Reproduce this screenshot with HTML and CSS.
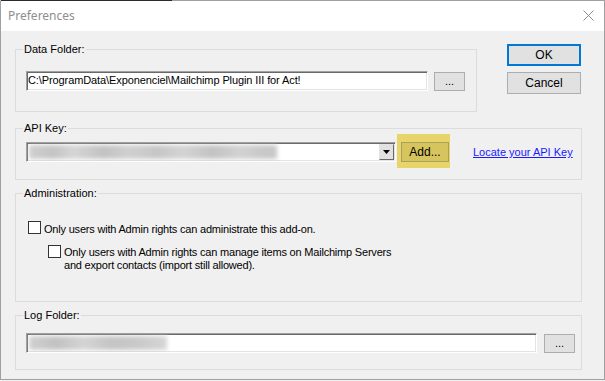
FILE: index.html
```html
<!DOCTYPE html>
<html lang="en">

<head>
    <meta charset="UTF-8">
    <meta name="viewport" content="width=device-width, initial-scale=1.0">
    <title>Preferences</title>
    <link rel="stylesheet" href="styles.css">
</head>

<body>
    <div class="window">
        <div class="titlebar">
            <span class="title">Preferences</span>
            <svg class="close" width="11" height="11" viewBox="0 0 11 11">
                <path d="M0.5 0.5 L10.5 10.5 M10.5 0.5 L0.5 10.5" stroke="#8c8c8c" stroke-width="1" fill="none" />
            </svg>
        </div>
        <div class="client">
            <div class="top_row">
                <div class="group data_group">
                    <div class="legend">Data Folder:</div>
                    <div class="field_row">
                        <div class="textbox data_path">C:\ProgramData\Exponenciel\Mailchimp Plugin III for Act!</div>
                        <button class="btn browse">...</button>
                    </div>
                </div>
                <div class="dialog_buttons">
                    <button class="btn ok">OK</button>
                    <button class="btn cancel">Cancel</button>
                </div>
            </div>

            <div class="group api_group">
                <div class="legend">API Key:</div>
                <div class="field_row">
                    <div class="combo">
                        <div class="textbox combo_text">
                            <div class="blurred api_blur"></div>
                        </div>
                        <div class="combo_arrow">
                            <svg width="7" height="4" viewBox="0 0 7 4"><path d="M0 0 H7 L3.5 4 Z" fill="#000" /></svg>
                        </div>
                    </div>
                    <div class="highlight">
                        <button class="btn add">Add...</button>
                    </div>
                    <a class="link" href="#">Locate your API Key</a>
                </div>
            </div>

            <div class="group admin_group">
                <div class="legend">Administration:</div>
                <div class="check first_check">
                    <span class="box"></span>
                    <span class="check_text">Only users with Admin rights can administrate this add-on.</span>
                </div>
                <div class="check second_check">
                    <span class="box"></span>
                    <span class="check_text">Only users with Admin rights can manage items on Mailchimp Servers<br>and export contacts (import still allowed).</span>
                </div>
            </div>

            <div class="group log_group">
                <div class="legend">Log Folder:</div>
                <div class="field_row">
                    <div class="textbox log_path">
                        <div class="blurred log_blur"></div>
                    </div>
                    <button class="btn browse">...</button>
                </div>
            </div>
        </div>
    </div>
</body>

</html>
```

FILE: styles.css
```css
body {
    margin: 0;
    background-color: #f0f0f0;
    font-family: "Liberation Sans", Arial, sans-serif;
    font-size: 10.5px;
    color: #000;
}

.window {
    width: 605px;
    height: 380px;
    box-sizing: border-box;
    border: 1px solid #a0a0a0;
    border-top-color: transparent;
    background: linear-gradient(to right, #2b2b2b 172px, #a0a0a0 172px) top left / 100% 1px no-repeat border-box, #f0f0f0;
    display: flex;
    flex-direction: column;
}

.titlebar {
    height: 30px;
    background-color: #fff;
    display: flex;
    align-items: center;
    justify-content: space-between;
    padding: 0 10px 0 7px;
}

.title {
    font-family: "Noto Sans", sans-serif;
    font-size: 12px;
    color: #8e8e8e;
    margin-top: -1px;
}

.close {
    margin-top: -1px;
}

.client {
    padding: 13px 22px 0 14px;
    display: flex;
    flex-direction: column;
}

.top_row {
    display: flex;
    align-items: flex-start;
}

/* group boxes */
.group {
    border: 1px solid #dcdcdc;
    padding: 0 0 0 10px;
}

.legend {
    width: max-content;
    height: 13px;
    line-height: 13px;
    margin: -7px 0 0 -3px;
    padding: 0 1px;
    background-color: #f0f0f0;
    font-size: 11px;
}

.data_group {
    width: 462px;
    box-sizing: border-box;
    margin-top: 5px;
    padding-bottom: 20px;
}

.api_group {
    margin-top: 16px;
    padding-bottom: 17px;
}

.admin_group {
    margin-top: 13px;
    padding-bottom: 29px;
}

.log_group {
    margin-top: 13px;
    padding-bottom: 16px;
}

.field_row {
    display: flex;
    align-items: center;
    margin-top: 15px;
}

.field_row > * {
    flex: none;
}

.api_group .field_row {
    margin-top: 7px;
}

.log_group .field_row {
    margin-top: 11px;
}

/* text boxes */
.textbox {
    height: 20px;
    box-sizing: border-box;
    background-color: #fff;
    border: 1px solid;
    border-color: #a0a0a0 #fff #fff #a0a0a0;
    box-shadow: inset 1px 1px #696969, inset -1px -1px #e3e3e3;
    line-height: 17px;
    padding: 0 1px;
    white-space: nowrap;
    overflow: hidden;
    font-size: 11px;
    letter-spacing: -0.1px;
}

.data_path {
    width: 402px;
}

.log_path {
    width: 511px;
    padding: 2px 2px;
}

.blurred {
    height: 14px;
    filter: blur(2px);
}

.api_blur {
    width: 248px;
    background: linear-gradient(to right, #cfcfcf, #c4c4c4 10%, #d6d6d6 18%, #c2c2c2 30%, #d0d0d0 40%, #c6c6c6 52%, #d4d4d4 62%, #c3c3c3 74%, #d2d2d2 85%, #c8c8c8 95%);
}

.log_blur {
    width: 138px;
    background: linear-gradient(to right, #d0d0d0, #c2c2c2 20%, #d4d4d4 40%, #c4c4c4 60%, #cacaca 80%, #d6d6d6);
}

.combo {
    width: 370px;
    display: flex;
    position: relative;
}

.combo_text {
    flex: 1;
    padding: 2px 2px;
}

.combo_arrow {
    position: absolute;
    right: 2px;
    top: 2px;
    width: 15px;
    height: 16px;
    box-sizing: border-box;
    background-color: #e1e1e1;
    border: 1px solid;
    border-color: #e3e3e3 #696969 #696969 #e3e3e3;
    display: flex;
    align-items: center;
    justify-content: center;
}

/* buttons */
.btn {
    font-family: "Liberation Sans", Arial, sans-serif;
    font-size: 11px;
    color: #000;
    background-color: #e1e1e1;
    border: 1px solid #adadad;
    padding: 0;
    box-sizing: border-box;
}

.browse {
    width: 31px;
    height: 19px;
    margin-left: 6px;
    line-height: 12px;
}

.log_group .browse {
    margin-left: 7px;
}

.dialog_buttons {
    margin-left: 30px;
    width: 74px;
    display: flex;
    flex-direction: column;
    gap: 6px;
}

.ok,
.cancel {
    width: 74px;
    height: 22px;
    font-size: 12px;
}

.ok {
    border: 2px solid #0078d7;
}

.highlight {
    position: relative;
    margin-left: 5px;
}

.highlight::before {
    content: "";
    position: absolute;
    top: -8px;
    bottom: -6px;
    left: -4px;
    right: -1px;
    background-color: #e7d46b;
}

.add {
    position: relative;
    display: block;
    width: 48px;
    height: 20px;
    font-size: 12px;
    background-color: #d6c45e;
    border-color: #aaa05c;
}

.link {
    margin-left: 24px;
    color: #1a1aff;
    text-decoration: underline;
    font-size: 11px;
    white-space: nowrap;
}

/* check boxes */
.check {
    display: flex;
    align-items: flex-start;
}

.box {
    width: 13px;
    height: 13px;
    box-sizing: border-box;
    border: 1px solid #333;
    background-color: #fff;
    flex: none;
}

.check_text {
    margin-left: 3px;
    line-height: 13px;
    font-size: 11px;
    letter-spacing: -0.2px;
}

.first_check {
    margin: 21px 0 0 2px;
}

.first_check .check_text {
    margin-top: 2px;
}

.second_check {
    margin: 9px 0 0 22px;
}

.second_check .check_text {
    margin-top: 1px;
}
```
